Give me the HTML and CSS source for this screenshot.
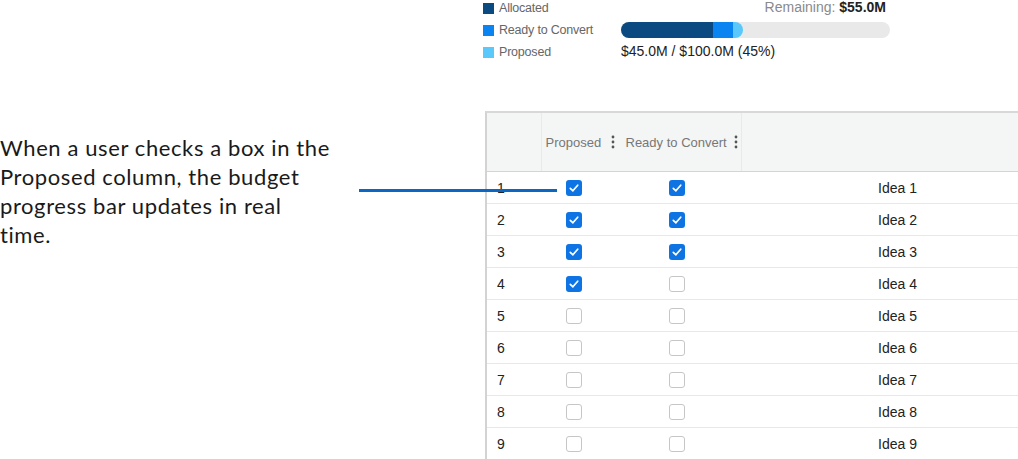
FILE: index.html
```html
<!DOCTYPE html>
<html lang="en">
<head>
    <meta charset="UTF-8">
    <title>Budget Progress - Proposed Ideas</title>
    <link rel="stylesheet" href="styles.css">
</head>
<body>
    <div class="page">
        <p class="callout">When a user checks a box in the Proposed column, the budget progress bar updates in real time.</p>

        <div class="board">
            <!-- budget summary -->
            <div class="budget">
                <ul class="legend">
                    <li><span class="swatch allocated"></span>Allocated</li>
                    <li><span class="swatch ready"></span>Ready to Convert</li>
                    <li><span class="swatch proposed"></span>Proposed</li>
                </ul>
                <div class="meter">
                    <div class="remaining">Remaining: <b>$55.0M</b></div>
                    <div class="track">
                        <div class="fill">
                            <span class="seg allocated" style="width: 92px"></span>
                            <span class="seg ready" style="width: 20px"></span>
                            <span class="seg proposed" style="width: 10px"></span>
                        </div>
                    </div>
                    <div class="amount">$45.0M / $100.0M (45%)</div>
                </div>
            </div>

            <!-- ideas grid -->
            <div class="grid">
                <table>
                    <thead>
                        <tr>
                            <th class="col-num"></th>
                            <th class="col-prop"><span class="head">Proposed <svg class="kebab" width="4" height="14" viewBox="0 0 4 14"><circle cx="2" cy="2" r="1.4"/><circle cx="2" cy="7" r="1.4"/><circle cx="2" cy="12" r="1.4"/></svg></span></th>
                            <th class="col-ready"><span class="head">Ready to Convert <svg class="kebab" width="4" height="14" viewBox="0 0 4 14"><circle cx="2" cy="2" r="1.4"/><circle cx="2" cy="7" r="1.4"/><circle cx="2" cy="12" r="1.4"/></svg></span></th>
                            <th class="col-title"></th>
                        </tr>
                    </thead>
                    <tbody id="rows"></tbody>
                </table>
            </div>
        </div>

        <div class="pointer"></div>
    </div>

    <script>
        const ideas = [
            { n: 1, proposed: true,  ready: true  },
            { n: 2, proposed: true,  ready: true  },
            { n: 3, proposed: true,  ready: true  },
            { n: 4, proposed: true,  ready: false },
            { n: 5, proposed: false, ready: false },
            { n: 6, proposed: false, ready: false },
            { n: 7, proposed: false, ready: false },
            { n: 8, proposed: false, ready: false },
            { n: 9, proposed: false, ready: false }
        ];

        const tick = '<svg width="16" height="16" viewBox="0 0 16 16"><path d="M4.3 8.3 L6.9 10.8 L11.7 5.2" fill="none" stroke="#fff" stroke-width="1.7" stroke-linecap="round" stroke-linejoin="round"/></svg>';

        function box(checked) {
            return `<span class="check ${checked ? 'on' : ''}">${checked ? tick : ''}</span>`;
        }

        document.getElementById('rows').innerHTML = ideas.map(i => `
            <tr>
                <td class="col-num">${i.n}</td>
                <td class="col-prop">${box(i.proposed)}</td>
                <td class="col-ready">${box(i.ready)}</td>
                <td class="col-title">Idea ${i.n}</td>
            </tr>`).join('');
    </script>
</body>
</html>
```

FILE: styles.css
```css
html, body { margin: 0; padding: 0; background: #fff; overflow: hidden; }
body { font-family: "Liberation Sans", Arial, sans-serif; color: #222; }

.page { position: relative; display: grid; grid-template-columns: 483px 1fr; height: 459px; }

.callout { margin: 0; padding-top: 133px; width: 336px; align-self: start; font-family: Lato, "Noto Sans", sans-serif; font-size: 22px; line-height: 29px; letter-spacing: 0.6px; color: #1a1a1a; }

.pointer { position: absolute; left: 359px; top: 189px; width: 198px; height: 3px; background: #0b67c4; }

/* budget summary */
.budget { display: flex; height: 111px; }
.legend { list-style: none; margin: 0; padding: 0; width: 138px; display: flex; flex-direction: column; gap: 6px; }
.legend li { display: flex; align-items: center; font-size: 12.5px; line-height: 16px; color: #666; letter-spacing: -0.2px; }
.swatch { width: 11px; height: 11px; margin-right: 5px; }
.allocated { background: #0b4a80; }
.ready { background: #0a84f0; }
.proposed { background: #5ac8fa; }

.meter { width: 269px; }
.remaining { font-size: 14px; line-height: 14px; text-align: right; padding-right: 4px; color: #8a8a8a; }
.remaining b { color: #222; font-weight: 600; }
.track { margin-top: 8px; height: 16px; background: #e9e9e9; border-radius: 8px; }
.fill { display: inline-flex; height: 16px; border-radius: 8px; overflow: hidden; }
.seg { display: block; height: 100%; }
.amount { margin-top: 6px; font-size: 14px; line-height: 14px; color: #222; }

/* ideas grid */
.grid { margin-left: 2px; border-left: 2px solid #d3d3d3; border-top: 2px solid #d8d8d8; width: 569px; }
table { border-collapse: collapse; table-layout: fixed; width: 567px; }
th { height: 58px; background: #f4f5f5; border-bottom: 1px solid #d4d4d4; font-size: 13px; font-weight: normal; color: #777; text-align: left; padding: 0; }
th.col-num, th.col-ready { border-right: 1px solid #e8e9e9; }
.head { display: flex; align-items: center; white-space: nowrap; }
.kebab { fill: #555; margin-left: 10px; }
.col-prop .head { padding-left: 4px; }
.col-ready .head { padding-left: 5px; }
.col-ready .kebab { margin-left: 7px; }

td { height: 31px; padding: 0; border-bottom: 1px solid #e8e8e8; font-size: 14px; color: #222; }
.col-num { width: 54px; padding-left: 10px; box-sizing: border-box; }
.col-prop { width: 79px; }
.col-ready { width: 120px; }
td.col-prop { padding-left: 25px; }
td.col-ready { padding-left: 48px; }
td.col-title { text-align: center; }

.check { display: block; width: 16px; height: 16px; box-sizing: border-box; border: 1px solid #c6c6c6; border-radius: 3px; background: #fff; }
.check.on { border: none; background: #0e74e4; }
.check svg { display: block; }
```
